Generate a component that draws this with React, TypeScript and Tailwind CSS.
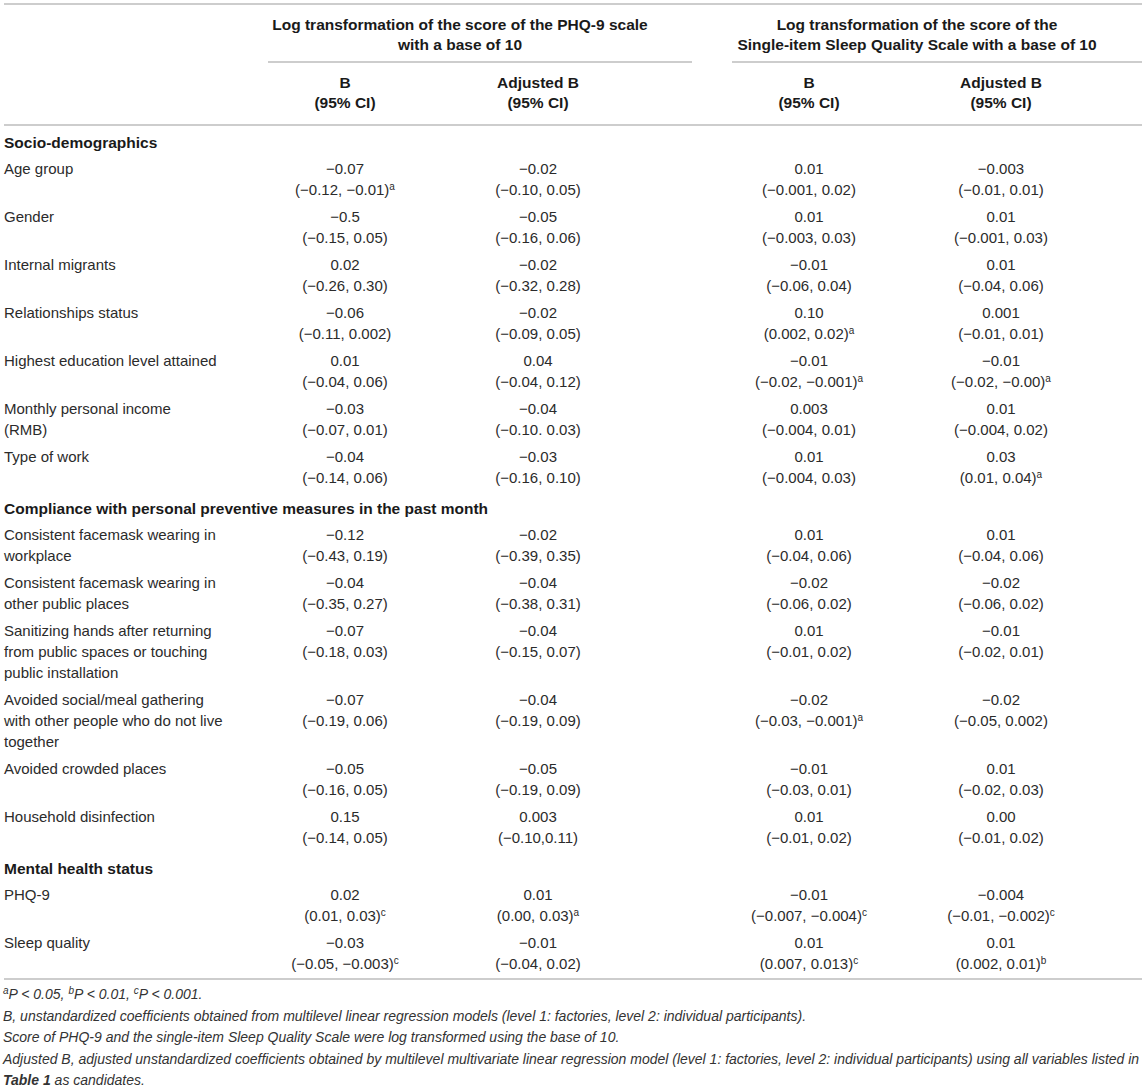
import React from "react";

type Cell = { v: string; ci: string; sup?: string };
type Row = { label: React.ReactNode; cells: [Cell, Cell, Cell, Cell] };
type Section = { title: string; rows: Row[] };

const c = (v: string, ci: string, sup?: string): Cell => ({ v, ci, sup });

const sections: Section[] = [
  {
    title: "Socio-demographics",
    rows: [
      { label: "Age group", cells: [c("−0.07", "(−0.12, −0.01)", "a"), c("−0.02", "(−0.10, 0.05)"), c("0.01", "(−0.001, 0.02)"), c("−0.003", "(−0.01, 0.01)")] },
      { label: "Gender", cells: [c("−0.5", "(−0.15, 0.05)"), c("−0.05", "(−0.16, 0.06)"), c("0.01", "(−0.003, 0.03)"), c("0.01", "(−0.001, 0.03)")] },
      { label: "Internal migrants", cells: [c("0.02", "(−0.26, 0.30)"), c("−0.02", "(−0.32, 0.28)"), c("−0.01", "(−0.06, 0.04)"), c("0.01", "(−0.04, 0.06)")] },
      { label: "Relationships status", cells: [c("−0.06", "(−0.11, 0.002)"), c("−0.02", "(−0.09, 0.05)"), c("0.10", "(0.002, 0.02)", "a"), c("0.001", "(−0.01, 0.01)")] },
      { label: "Highest education level attained", cells: [c("0.01", "(−0.04, 0.06)"), c("0.04", "(−0.04, 0.12)"), c("−0.01", "(−0.02, −0.001)", "a"), c("−0.01", "(−0.02, −0.00)", "a")] },
      { label: <>Monthly personal income<br />(RMB)</>, cells: [c("−0.03", "(−0.07, 0.01)"), c("−0.04", "(−0.10. 0.03)"), c("0.003", "(−0.004, 0.01)"), c("0.01", "(−0.004, 0.02)")] },
      { label: "Type of work", cells: [c("−0.04", "(−0.14, 0.06)"), c("−0.03", "(−0.16, 0.10)"), c("0.01", "(−0.004, 0.03)"), c("0.03", "(0.01, 0.04)", "a")] },
    ],
  },
  {
    title: "Compliance with personal preventive measures in the past month",
    rows: [
      { label: <>Consistent facemask wearing in<br />workplace</>, cells: [c("−0.12", "(−0.43, 0.19)"), c("−0.02", "(−0.39, 0.35)"), c("0.01", "(−0.04, 0.06)"), c("0.01", "(−0.04, 0.06)")] },
      { label: <>Consistent facemask wearing in<br />other public places</>, cells: [c("−0.04", "(−0.35, 0.27)"), c("−0.04", "(−0.38, 0.31)"), c("−0.02", "(−0.06, 0.02)"), c("−0.02", "(−0.06, 0.02)")] },
      { label: <>Sanitizing hands after returning<br />from public spaces or touching<br />public installation</>, cells: [c("−0.07", "(−0.18, 0.03)"), c("−0.04", "(−0.15, 0.07)"), c("0.01", "(−0.01, 0.02)"), c("−0.01", "(−0.02, 0.01)")] },
      { label: <>Avoided social/meal gathering<br />with other people who do not live<br />together</>, cells: [c("−0.07", "(−0.19, 0.06)"), c("−0.04", "(−0.19, 0.09)"), c("−0.02", "(−0.03, −0.001)", "a"), c("−0.02", "(−0.05, 0.002)")] },
      { label: "Avoided crowded places", cells: [c("−0.05", "(−0.16, 0.05)"), c("−0.05", "(−0.19, 0.09)"), c("−0.01", "(−0.03, 0.01)"), c("0.01", "(−0.02, 0.03)")] },
      { label: "Household disinfection", cells: [c("0.15", "(−0.14, 0.05)"), c("0.003", "(−0.10,0.11)"), c("0.01", "(−0.01, 0.02)"), c("0.00", "(−0.01, 0.02)")] },
    ],
  },
  {
    title: "Mental health status",
    rows: [
      { label: "PHQ-9", cells: [c("0.02", "(0.01, 0.03)", "c"), c("0.01", "(0.00, 0.03)", "a"), c("−0.01", "(−0.007, −0.004)", "c"), c("−0.004", "(−0.01, −0.002)", "c")] },
      { label: "Sleep quality", cells: [c("−0.03", "(−0.05, −0.003)", "c"), c("−0.01", "(−0.04, 0.02)"), c("0.01", "(0.007, 0.013)", "c"), c("0.01", "(0.002, 0.01)", "b")] },
    ],
  },
];

const Sup = ({ children }: { children: React.ReactNode }) => (
  <sup className="text-[10px]">{children}</sup>
);

function ValueCell({ cell, w }: { cell: Cell; w: string }) {
  return (
    <div className={`${w} shrink-0 text-center`}>
      <div>{cell.v}</div>
      <div>
        {cell.ci}
        {cell.sup ? <Sup>{cell.sup}</Sup> : null}
      </div>
    </div>
  );
}

function DataRow({ row }: { row: Row }) {
  return (
    <div className="flex pt-[2px] pb-[4px]">
      <div className="w-[264px] shrink-0">{row.label}</div>
      <ValueCell cell={row.cells[0]} w="w-[154px]" />
      <ValueCell cell={row.cells[1]} w="w-[232px]" />
      <div className="w-[78px] shrink-0" />
      <ValueCell cell={row.cells[2]} w="w-[154px]" />
      <ValueCell cell={row.cells[3]} w="w-[230px]" />
    </div>
  );
}

const Line = () => <div className="h-[2px] w-full bg-[#cdcdcd]" />;

export default function App() {
  return (
    <div
      className="w-[1146px] h-[1089px] bg-white text-[#2b2b2b] overflow-hidden"
      style={{ fontFamily: '"Liberation Sans", Arial, Helvetica, sans-serif' }}
    >
      <div className="px-[4px] pt-[3px]">
        <Line />
        <div className="flex font-bold text-[15.5px] leading-[20px] text-[#1a1a1a]">
          <div className="w-[264px] shrink-0" />
          <div className="w-[424px] shrink-0 pr-[40px] pt-[10px] pb-[6px] text-center border-b-2 border-[#cdcdcd]">
            Log transformation of the score of the PHQ-9 scale
            <br />
            with a base of 10
          </div>
          <div className="w-[40px] shrink-0" />
          <div className="w-[410px] shrink-0 pr-[40px] pt-[10px] pb-[6px] text-center border-b-2 border-[#cdcdcd]">
            Log transformation of the score of the
            <br />
            Single-item Sleep Quality Scale with a base of 10
          </div>
        </div>
        <div className="flex font-bold text-[15.5px] leading-[20px] text-[#1a1a1a] pt-[10px] pb-[11px]">
          <div className="w-[264px] shrink-0" />
          <div className="w-[154px] shrink-0 text-center">B<br />(95% CI)</div>
          <div className="w-[232px] shrink-0 text-center">Adjusted B<br />(95% CI)</div>
          <div className="w-[78px] shrink-0" />
          <div className="w-[154px] shrink-0 text-center">B<br />(95% CI)</div>
          <div className="w-[230px] shrink-0 text-center">Adjusted B<br />(95% CI)</div>
        </div>
        <Line />
        <div className="text-[15px] leading-[21px]">
          {sections.map((s) => (
            <div key={s.title}>
              <div className="pt-[6px] pb-[3px] font-bold text-[15.5px] text-[#1a1a1a]">{s.title}</div>
              {s.rows.map((r, i) => (
                <DataRow key={i} row={r} />
              ))}
            </div>
          ))}
        </div>
        <Line />
      </div>
      <div className="px-[3px] pt-[4px] italic text-[14px] leading-[21.5px] text-[#333]">
        <div>
          <Sup>a</Sup>P &lt; 0.05, <Sup>b</Sup>P &lt; 0.01, <Sup>c</Sup>P &lt; 0.001.
        </div>
        <div>
          B, unstandardized coefficients obtained from multilevel linear regression models (level 1: factories, level 2: individual participants).
        </div>
        <div>Score of PHQ-9 and the single-item Sleep Quality Scale were log transformed using the base of 10.</div>
        <div>
          Adjusted B, adjusted unstandardized coefficients obtained by multilevel multivariate linear regression model (level 1: factories, level 2: individual participants) using all variables listed in
        </div>
        <div>
          <span className="font-bold">Table 1</span> as candidates.
        </div>
      </div>
    </div>
  );
}
